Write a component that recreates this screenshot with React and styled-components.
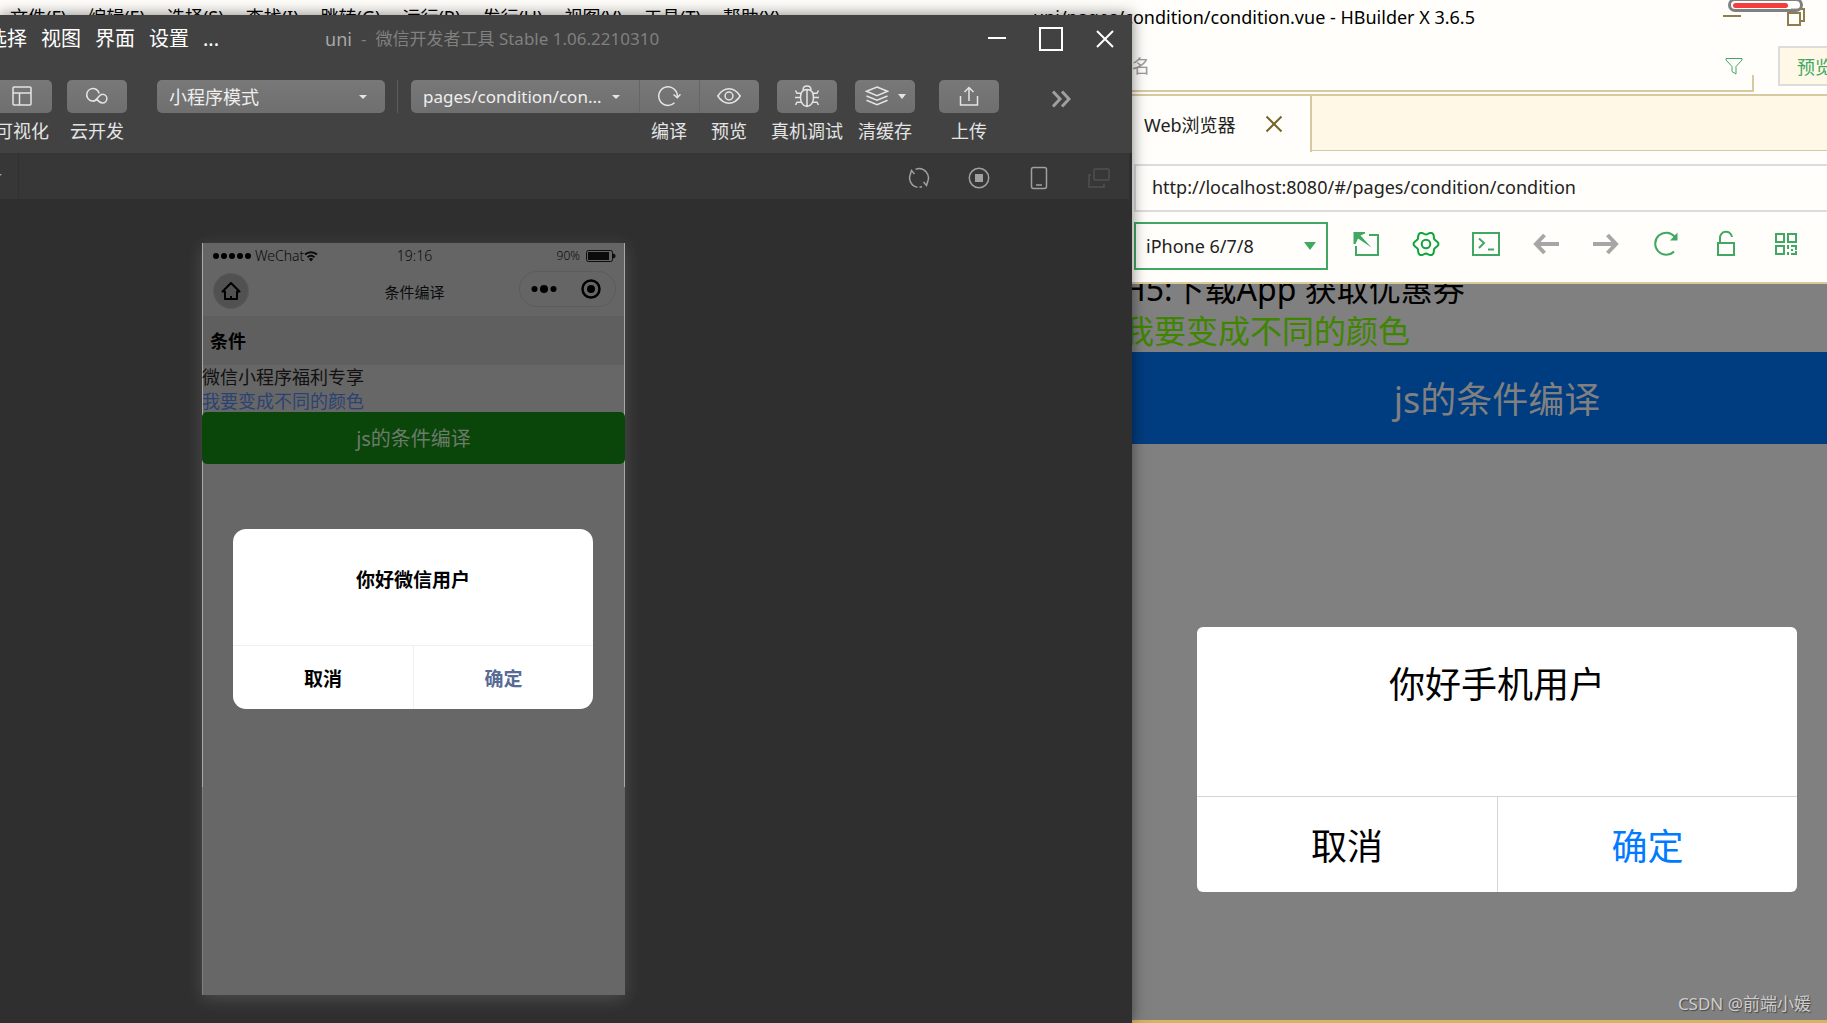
import React from "react";
import styled, { createGlobalStyle } from "styled-components";

const Global = createGlobalStyle`
  *, *::before, *::after { box-sizing: border-box; }
  html, body { margin: 0; height: 100%; overflow: hidden; }
  body, button, input, select {
    font-family: "Noto Sans", "Noto Sans CJK SC", sans-serif;
    font-size: 18px;
  }
  button, input, select {
    margin: 0; padding: 0; border: 0; border-radius: 0;
    background: none; color: inherit; appearance: none; outline: none;
  }
  h1, p { margin: 0; font-weight: 400; }
`;

const Desktop = styled.main`
  position: relative;
  height: 100vh;
  overflow: hidden;
  background: #fffefa;
`;

/* ---------- Icons ---------- */

const Svg = styled.svg`
  display: block;
  flex: none;
  width: ${(p) => p.$w || 24}px;
  height: ${(p) => p.$h || p.$w || 24}px;
  fill: none;
  stroke: currentColor;
  stroke-width: ${(p) => p.$s || 1.5};
`;

const Icon = ({ w, h, s, children }) => (
  <Svg $w={w} $h={h} $s={s} viewBox={`0 0 ${w || 24} ${h || w || 24}`} aria-hidden="true">
    {children}
  </Svg>
);

const LayoutIcon = () => (
  <Icon>
    <rect x="3" y="3" width="18" height="18" rx="1" />
    <path d="M3 9h18M9.5 9v12" />
  </Icon>
);
const CloudIcon = () => (
  <Icon>
    <path d="M12.200 15.500A6.300 6.300 0 1 1 14.200 9.500" />
    <path d="M8 17.200C12 17.200 13.500 10.200 17.500 10.200A4.400 4.400 0 0 1 17.500 19C14.800 19 13.300 17.200 11.800 15" />
  </Icon>
);
const CompileIcon = () => (
  <Icon>
    <path d="M17.500 18.800A9.300 9.300 0 1 1 20.300 13" />
    <path d="M16.500 10.500l3.800 3.300 3.200-3.500" />
  </Icon>
);
const EyeIcon = () => (
  <Icon>
    <path d="M.8 12C4 7 8 4.800 12 4.800S20 7 23.200 12C20 17 16 19.200 12 19.200S4 17 .8 12z" />
    <circle cx="12" cy="12" r="3.900" />
  </Icon>
);
const BugIcon = () => (
  <Icon w={26}>
    <path d="M13 6.500c4.500 0 6.500 3.500 6.500 8S17 23.500 13 23.500 6.500 19 6.500 14.500 8.500 6.500 13 6.500zM13 6.500v17" />
    <path d="M9 7C9 4.500 10.500 3 13 3s4 1.500 4 4M1 14.500h5.500M19.500 14.500H25M1.500 7.500l1.500 2.800h4.200M24.500 7.500L23 10.300h-4.200M1.500 22l1.500-2.800h4.200M24.500 22L23 19.200h-4.200" />
  </Icon>
);
const LayersIcon = () => (
  <Icon>
    <path d="M12 3l10.500 4.300L12 11.600 1.500 7.300zM1.500 12L12 16.300 22.500 12M1.500 16.300L12 20.600l10.500-4.300" />
  </Icon>
);
const UploadIcon = () => (
  <Icon>
    <path d="M3.500 12v9h17v-9M12 17V3.500M7.500 8L12 3.500 16.500 8" />
  </Icon>
);
const MoreIcon = () => (
  <Icon w={20} s={3}>
    <path d="M2 2.500L9 10l-7 7.500M11 2.500L18 10l-7 7.500" />
  </Icon>
);
const RestartIcon = () => (
  <Icon>
    <path d="M3.800 7.500A9.300 9.300 0 0 0 10.500 21.200M8.500 3.400A9.300 9.300 0 0 1 20.200 16.500M12.500 21.300l2.500-.5" />
    <path d="M3.200 8.500L4.500 4.500 7.500 8M20.800 15.500l-1.300 4-3-3.500" />
  </Icon>
);
const StopIcon = () => (
  <Icon>
    <circle cx="12" cy="12" r="9.700" />
    <rect x="8" y="8" width="8" height="8" fill="currentColor" stroke="none" />
  </Icon>
);
const DeviceIcon = () => (
  <Icon>
    <rect x="4.500" y="1.500" width="15" height="21" rx="2" />
    <path d="M9 19h6" />
  </Icon>
);
const WindowsIcon = () => (
  <Icon>
    <rect x="7" y="3" width="15" height="11" rx="1" />
    <path d="M4 9H2v12h15v-3" />
  </Icon>
);
const WifiIcon = () => (
  <Icon w={14} h={12} s={2}>
    <path d="M1 4.500a9 9 0 0 1 12 0M3.500 7.200a5.500 5.500 0 0 1 7 0" />
    <path d="M4.800 9L7 11.500 9.200 9a3.200 3.200 0 0 0-4.400 0z" fill="currentColor" stroke="none" />
  </Icon>
);
const HomeIcon = () => (
  <Icon w={20} s={2}>
    <path d="M1.500 10.500L10 2l8.500 8.500H16v7.500H4v-7.500z" strokeLinejoin="round" />
    <path d="M10 18v-3" />
  </Icon>
);
const BatteryIcon = () => (
  <Icon w={30} h={12} s={1}>
    <rect x=".5" y=".5" width="26" height="11" rx="2" />
    <rect x="2" y="2" width="21" height="8" fill="currentColor" stroke="none" />
    <path d="M27.500 4c2 0 2 4 0 4z" fill="currentColor" />
  </Icon>
);
const ExpandIcon = () => (
  <Icon w={28} s={2}>
    <path d="M17 5h9v20H4v-9" />
    <path d="M1.500 2H13v1.500L8.500 5.500 19.500 17.500 6 8.500 3.500 14h-2z" fill="currentColor" stroke="none" />
  </Icon>
);

/* Six-lobed outline: a circle whose radius swells once every 60 degrees. */
const gearPath = Array.from({ length: 72 }, (_, i) => {
  const a = (i * Math.PI) / 36;
  const r = 11 + 1.4 * Math.cos(6 * a);
  return `${i ? "L" : "M"}${(14 + r * Math.cos(a)).toFixed(1)} ${(14 + r * Math.sin(a)).toFixed(1)}`;
}).join("") + "z";

const GearIcon = () => (
  <Icon w={28} s={2}>
    <path d={gearPath} strokeLinejoin="round" />
    <circle cx="14" cy="14" r="4.300" />
  </Icon>
);
const TerminalIcon = () => (
  <Icon w={28} s={2}>
    <rect x="1" y="3" width="26" height="22" />
    <path d="M7 8.500l5 4.500-5 5M16 19.500h6" />
  </Icon>
);
const BackIcon = () => (
  <Icon w={28} s={4}>
    <path d="M27 14H4M12.500 5L4 14l8.500 9" />
  </Icon>
);
const ForwardIcon = () => (
  <Icon w={28} s={4}>
    <path d="M1 14h23M15.500 5l8.500 9-8.500 9" />
  </Icon>
);
const ReloadIcon = () => (
  <Icon w={28} s={2}>
    <path d="M22 21.500A11 11 0 1 1 22.500 6.500" />
    <path d="M25.500 2.500v8H18z" fill="currentColor" stroke="none" />
  </Icon>
);
const LockIcon = () => (
  <Icon w={28} s={2}>
    <rect x="6" y="13" width="16" height="12" />
    <path d="M8 13V8.500a6 6 0 0 1 12-1.500" />
  </Icon>
);
const QrIcon = () => (
  <Icon w={28} s={2}>
    <path d="M4 4h8v8H4zM16 4h8v8h-8zM4 16h8v8H4zM16 15v4M19 16h5v4M16 22v3M19 24h5v-3M19 20h2" />
  </Icon>
);
const FilterIcon = () => (
  <Icon w={18} s={1}>
    <path d="M1 1.500h16v1.500L11 9.500V17l-4-2.500v-5L1 3z" />
  </Icon>
);
const Caret = ({ w = 10, h = 5 }) => (
  <Icon w={w} h={h}>
    <path d={`M0 0h${w}L${w / 2} ${h}z`} fill="currentColor" stroke="none" />
  </Icon>
);

/* ---------- HBuilder window ---------- */

const Editor = styled.section`
  height: 100%;
  display: flex;
  flex-direction: column;
  color: #000;
  border-bottom: 3px solid #d4b363;
`;

const EditorHeader = styled.header`
  flex: none;
  height: 34px;
  display: flex;
  align-items: center;
  padding: 0 22px 0 10px;
`;

const EditorMenu = styled.nav`
  display: flex;
  gap: 22px;
  button { white-space: nowrap; line-height: 24px; }
`;

const EditorTitle = styled.h1`
  margin-left: auto;
  margin-right: 248px;
  font-size: 18px;
  line-height: 24px;
  white-space: nowrap;
`;

const EditorControls = styled.div`
  display: flex;
  gap: 46px;
  color: #8e7d4d;
`;

const SearchRow = styled.div`
  flex: none;
  height: 60px;
  display: flex;
  justify-content: flex-end;
  align-items: flex-start;
  overflow: hidden;
`;

const SearchField = styled.label`
  display: flex;
  align-items: center;
  width: 686px;
  height: 58px;
  padding: 8px 9px 0 28px;
  color: #40a862;
  border-bottom: 2px solid #d8c9a0;
  border-right: 2px solid;
  border-image: linear-gradient(to top, #d8c9a0 16px, transparent 16px) 2;
  input {
    flex: 1;
    min-width: 0;
    color: #333;
    &::placeholder { color: #999; opacity: 1; }
  }
`;

const PreviewButton = styled.button`
  flex: none;
  width: 74px;
  height: 40px;
  margin: 12px -25px 0 24px;
  border: 2px solid #dcdcdc;
  background: #fff8e7;
  color: #40a862;
`;

const Dock = styled.div`
  flex: 1;
  min-height: 0;
  width: 705px;
  margin-left: auto;
  display: flex;
  flex-direction: column;
  overflow: hidden;
  border-top: 2px solid #d8c9a0;
`;

const TabBar = styled.div`
  flex: none;
  display: flex;
  height: 56px;
`;

const Tab = styled.div`
  display: flex;
  align-items: center;
  gap: 29px;
  width: 190px;
  padding-left: 22px;
  color: #222;
  border-right: 2px solid #d8c9a0;
  button { color: #77632b; }
`;

const TabFill = styled.div`
  flex: 1;
  height: 55px;
  background: #fff8e7;
  border-bottom: 1px solid #d8c9a0;
`;

const AddressInput = styled.input`
  flex: none;
  height: 48px;
  margin: 12px -4px 0 12px;
  padding: 0 16px 2px;
  font-size: 18px;
  color: #222;
  border: 2px solid #dcdcdc;
`;

const BrowserTools = styled.div`
  flex: none;
  display: flex;
  align-items: center;
  gap: 32px;
  height: 72px;
  padding: 0 27px 2px 12px;
  border-bottom: 2px solid #d8c9a0;
  color: #40a862;
  > button { padding-bottom: 4px; }
`;

const SelectBox = styled.span`
  display: grid;
  align-items: center;
  flex: none;
  width: ${(p) => p.$w}px;
  height: ${(p) => p.$h}px;
  > * { grid-area: 1 / 1; }
  > select { width: 100%; height: 100%; }
  > svg { justify-self: end; margin-right: ${(p) => p.$arrow}px; pointer-events: none; }
`;

const DeviceSelect = styled(SelectBox)`
  margin: 0 -8px 0 0;
  border: 2px solid #40a862;
  select { padding-left: 10px; font-size: 18px; color: #222; }
`;

const PlainButton = styled.button`
  flex: none;
  display: grid;
  place-items: center;
  color: ${(p) => p.$color || "inherit"};
`;

const H5Viewport = styled.div`
  flex: 1;
  min-height: 0;
  overflow: hidden;
  background: #808080;
`;

const H5Page = styled.div`
  position: relative;
  width: 750px;
  margin-top: -16px;
  font-size: 32px;
  line-height: 42px;
`;

const Line = styled.p`
  color: ${(p) => p.$color};
  white-space: nowrap;
`;

const PageButton = styled.button`
  display: block;
  width: 100%;
  height: ${(p) => p.$h}px;
  padding-bottom: 2px;
  font-size: ${(p) => p.$size}px;
  color: ${(p) => p.$color};
  background: ${(p) => p.$bg};
  border-radius: ${(p) => p.$radius || 0}px;
`;

/* ---------- Modal, shared by both previews ---------- */

const ModalBox = styled.div`
  position: absolute;
  top: ${(p) => p.$top}px;
  left: ${(p) => p.$left}px;
  width: ${(p) => p.$w}px;
  overflow: hidden;
  border-radius: ${(p) => p.$radius}px;
  background: #fff;
  color: #000;
  text-align: center;
  font-size: ${(p) => p.$size}px;
  font-weight: ${(p) => p.$weight};
`;

const ModalTitle = styled.div`
  height: ${(p) => p.$h}px;
  padding-top: ${(p) => p.$pad}px;
  line-height: 40px;
`;

const ModalActions = styled.div`
  display: grid;
  grid-template-columns: 1fr 1fr;
  height: ${(p) => p.$h}px;
  border-top: 1px solid ${(p) => p.$line};
  button { font-size: inherit; font-weight: inherit; }
  button + button {
    color: ${(p) => p.$accent};
    border-left: 1px solid ${(p) => p.$line};
  }
`;

/* ---------- WeChat developer tools window ---------- */

const DevTools = styled.section`
  position: absolute;
  inset: 15px 695px 0 0;
  display: flex;
  flex-direction: column;
  background: #2f2f2f;
  box-shadow: 0 0 14px rgba(0, 0, 0, 0.5);
`;

const DevTitleBar = styled.header`
  flex: none;
  display: flex;
  align-items: center;
  height: 47px;
  padding: 0 18px 0 0;
  background: #424242;
  color: #808080;
`;

const DevMenu = styled.nav`
  display: flex;
  gap: 14px;
  margin: 0 106px 0 -13px;
  button { font-size: 20px; color: #fff; white-space: nowrap; line-height: 28px; }
`;

const DevTitle = styled.h1`
  display: flex;
  gap: 9px;
  font-size: 17px;
  line-height: 24px;
  white-space: nowrap;
  b { font-weight: 400; font-size: 18px; color: #a8a8a8; }
`;

const DevControls = styled.div`
  display: flex;
  gap: 33px;
  margin-left: auto;
  color: #fff;
`;

const ToolBar = styled.div`
  flex: none;
  display: flex;
  align-items: flex-start;
  height: 91px;
  padding: 18px 61px 0 0;
  background: #424242;
  color: #e4e4e4;
`;

const ToolGroup = styled.div`
  display: flex;
  gap: ${(p) => p.$gap || 0}px;
  margin-left: ${(p) => p.$ml || 0}px;
`;

const chip = `
  background: linear-gradient(#787878, #6f6f6f);
  border-radius: 5px;
`;

const ToolButton = styled.button`
  display: flex;
  flex-direction: column;
  align-items: center;
  gap: 6px;
  width: 60px;
  line-height: 24px;
  white-space: nowrap;
`;

const Chip = styled.span`
  display: flex;
  align-items: center;
  justify-content: center;
  gap: 9px;
  width: 60px;
  height: 33px;
  padding-bottom: 1px;
  ${chip}
  ${(p) => p.$joined && "box-shadow: inset 1px 0 #666;"}
  ${(p) => p.$joined === "mid" && "border-radius: 0;"}
  ${(p) => p.$joined === "end" && "border-radius: 0 5px 5px 0;"}
`;

const ToolSelect = styled(SelectBox)`
  ${chip}
  ${(p) => p.$joined && "border-radius: 5px 0 0 5px;"}
  select { padding-left: 12px; font-size: ${(p) => p.$size}px; color: #eee; }
`;

const Divider = styled.span`
  width: 1px;
  height: ${(p) => p.$h}px;
  margin: 0 13px 0 12px;
  background: #5c5c5c;
`;

const MoreButton = styled(PlainButton)`
  height: 38px;
  margin-left: auto;
  color: #a0a0a0;
`;

const SubBar = styled.div`
  flex: none;
  display: flex;
  align-items: center;
  gap: 36px;
  height: 46px;
  padding: 0 18px 0 0;
  border-right: 3px solid #2f2f2f;
  background: #373737;
  color: #a0a0a0;
  > button { padding-top: 4px; }
`;

const SubBarStart = styled.div`
  display: flex;
  align-items: center;
  width: 19px;
  height: 100%;
  margin: 0 auto 0 0;
  border-right: 1px solid #303030;
  svg { margin-left: -6px; }
`;

const Stage = styled.div`
  flex: 1;
  min-height: 0;
  padding: 44px 0 0 202px;
`;

const Phone = styled.div`
  position: relative;
  width: 423px;
  background: #676767;
  color: #0b0b0b;
  box-shadow: 0 4px 16px rgba(255, 255, 255, 0.15);
`;

const Screen = styled.div`
  height: 544px;
  box-shadow: inset 1px 0 #a9a9a9, inset -1px 0 #a9a9a9;
`;

const ScreenRest = styled.div`
  height: 208px;
  border-left: 1px solid #808080;
`;

const ThreeCols = styled.div`
  display: grid;
  grid-template-columns: 1fr auto 1fr;
  align-items: center;
  height: ${(p) => p.$h}px;
  margin: 0 1px;
  padding: 0 8px ${(p) => p.$pb || 0}px 10px;
  background: #656565;
  font-size: ${(p) => p.$size}px;
  > :last-child { justify-self: end; }
`;

const StatusPart = styled.span`
  display: flex;
  align-items: center;
  gap: ${(p) => p.$gap || 0}px;
  font-size: ${(p) => p.$size || 14}px;
  font-weight: 300;
`;

const Dots = styled.span`
  display: flex;
  gap: 2px;
  margin-right: 4px;
  i { width: 6px; height: 6px; border-radius: 3px; background: #000; }
`;

const HomeButton = styled.button`
  display: grid;
  place-items: center;
  width: 36px;
  height: 36px;
  border: 1px solid #5a5a5a;
  border-radius: 18px;
  background: #515151;
  color: #000;
`;

const Capsule = styled.span`
  display: grid;
  grid-template-columns: 1fr 1fr;
  width: 97px;
  height: 36px;
  margin-bottom: 4px;
  border: 1px solid #5c5c5c;
  border-radius: 18px;
  color: #000;
`;

const SectionTitle = styled.div`
  height: 49px;
  margin: 0 1px;
  padding: 0 7px;
  line-height: 50px;
  font-weight: 700;
  background: #5f5f5f;
  color: #000;
`;

const PhoneText = styled.div`
  line-height: 24px;
  height: 47px;
`;

/* ---------- Desktop overlays ---------- */

const Recorder = styled.div`
  position: absolute;
  top: -2px;
  right: 24px;
  width: 75px;
  height: 14px;
  padding: 2px 12px 3px 2px;
  border: 3px solid #808080;
  border-radius: 7px;
  background: rgba(255, 255, 255, 0.6);
  &::before {
    content: "";
    display: block;
    height: 5px;
    border-radius: 3px;
    background: #f73c3c;
  }
`;

const Watermark = styled.div`
  position: absolute;
  right: 16px;
  bottom: 7px;
  font-size: 17px;
  line-height: 24px;
  color: #cdcdcd;
  text-shadow: 1px 1px 1px #444;
`;

const editorMenu = ["文件(F)", "编辑(E)", "选择(S)", "查找(I)", "跳转(G)", "运行(R)", "发行(U)", "视图(V)", "工具(T)", "帮助(Y)"];

const browserTools = [
  ["弹出", ExpandIcon],
  ["设置", GearIcon, "#0fa53c"],
  ["控制台", TerminalIcon],
  ["后退", BackIcon, "#a6a6a6"],
  ["前进", ForwardIcon, "#a6a6a6"],
  ["刷新", ReloadIcon],
  ["锁定", LockIcon],
  ["二维码", QrIcon],
];

const simulatorTools = [
  ["重启", RestartIcon],
  ["停止", StopIcon],
  ["设备", DeviceIcon],
  ["分离窗口", WindowsIcon, "#505050"],
];

const Tool = ({ label, icon: I, joined, caret }) => (
  <ToolButton type="button">
    <Chip $joined={joined}>
      <I />
      {caret && <Caret w={8} />}
    </Chip>
    {label}
  </ToolButton>
);

function HBuilder() {
  return (
    <Editor>
      <EditorHeader>
        <EditorMenu>
          {editorMenu.map((m) => <button type="button" key={m}>{m}</button>)}
        </EditorMenu>
        <EditorTitle>uni/pages/condition/condition.vue - HBuilder X 3.6.5</EditorTitle>
        <EditorControls>
          <PlainButton type="button" aria-label="最小化">
            <Icon w={18} s={2}><path d="M0 8h18" /></Icon>
          </PlainButton>
          <PlainButton type="button" aria-label="还原">
            <Icon w={18} s={2}><path d="M1 5h12v12H1zM5 5V1h12v12h-4" /></Icon>
          </PlainButton>
        </EditorControls>
      </EditorHeader>
      <SearchRow>
        <SearchField>
          <input type="text" placeholder="文件名" aria-label="文件名" />
          <FilterIcon />
        </SearchField>
        <PreviewButton type="button">预览</PreviewButton>
      </SearchRow>
      <Dock>
        <TabBar>
          <Tab>
            Web浏览器
            <PlainButton type="button" aria-label="关闭">
              <Icon w={18} s={2}><path d="M1.500 1.500l15 15M16.500 1.500l-15 15" /></Icon>
            </PlainButton>
          </Tab>
          <TabFill />
        </TabBar>
        <AddressInput type="text" aria-label="地址" defaultValue="http://localhost:8080/#/pages/condition/condition" />
        <BrowserTools>
          <DeviceSelect $w={194} $h={48} $arrow={10}>
            <select aria-label="设备"><option>iPhone 6/7/8</option></select>
            <Caret w={12} h={8} />
          </DeviceSelect>
          {browserTools.map(([name, I, color]) => (
            <PlainButton type="button" key={name} aria-label={name} $color={color}><I /></PlainButton>
          ))}
        </BrowserTools>
        <H5Viewport>
          <H5Page>
            <Line $color="#000">H5:下载App 获取优惠券</Line>
            <Line $color="#3f8500">我要变成不同的颜色</Line>
            <PageButton type="button" $h={92} $size={36} $color="#808080" $bg="#003d80">js的条件编译</PageButton>
            <ModalBox $top={359} $left={75} $w={600} $radius={6} $size={36} $weight={400}>
              <ModalTitle $h={169} $pad={38}>你好手机用户</ModalTitle>
              <ModalActions $h={96} $line="#d5d5d6" $accent="#007aff">
                <button type="button">取消</button>
                <button type="button">确定</button>
              </ModalActions>
            </ModalBox>
          </H5Page>
        </H5Viewport>
      </Dock>
    </Editor>
  );
}

function WeChatDevTools() {
  return (
    <DevTools>
      <DevTitleBar>
        <DevMenu>
          {["选择", "视图", "界面", "设置", "..."].map((m) => <button type="button" key={m}>{m}</button>)}
        </DevMenu>
        <DevTitle><b>uni</b><span>-</span><span>微信开发者工具 Stable 1.06.2210310</span></DevTitle>
        <DevControls>
          <PlainButton type="button" aria-label="最小化">
            <Icon w={18} s={2}><path d="M0 8h18" /></Icon>
          </PlainButton>
          <PlainButton type="button" aria-label="最大化">
            <Icon w={24} s={2}><rect x="1" y="1" width="22" height="22" /></Icon>
          </PlainButton>
          <PlainButton type="button" aria-label="关闭">
            <Icon w={18} s={2}><path d="M1 1l16 16M17 1L1 17" /></Icon>
          </PlainButton>
        </DevControls>
      </DevTitleBar>
      <ToolBar>
        <ToolGroup $gap={15} $ml={-8}>
          <Tool label="可视化" icon={LayoutIcon} />
          <Tool label="云开发" icon={CloudIcon} />
        </ToolGroup>
        <ToolGroup $ml={30}>
          <ToolSelect $w={228} $h={33} $arrow={18} $size={18}>
            <select aria-label="模式"><option>小程序模式</option></select>
            <Caret w={8} h={4} />
          </ToolSelect>
          <Divider $h={33} />
          <ToolSelect $w={228} $h={33} $arrow={19} $size={17} $joined>
            <select aria-label="编译模式"><option>pages/condition/con...</option></select>
            <Caret w={8} h={4} />
          </ToolSelect>
          <Tool label="编译" icon={CompileIcon} joined="mid" />
          <Tool label="预览" icon={EyeIcon} joined="end" />
        </ToolGroup>
        <ToolGroup $gap={18} $ml={18}>
          <Tool label="真机调试" icon={BugIcon} />
          <Tool label="清缓存" icon={LayersIcon} caret />
        </ToolGroup>
        <ToolGroup $ml={24}>
          <Tool label="上传" icon={UploadIcon} />
        </ToolGroup>
        <MoreButton type="button" aria-label="更多"><MoreIcon /></MoreButton>
      </ToolBar>
      <SubBar>
        <SubBarStart><Caret w={8} h={4} /></SubBarStart>
        {simulatorTools.map(([name, I, color]) => (
          <PlainButton type="button" key={name} aria-label={name} $color={color}><I /></PlainButton>
        ))}
      </SubBar>
      <Stage>
        <Phone>
          <Screen>
            <ThreeCols $h={26} $size={14} $pb={1}>
              <StatusPart>
                <Dots><i /><i /><i /><i /><i /></Dots>
                WeChat
                <WifiIcon />
              </StatusPart>
              <StatusPart>19:16</StatusPart>
              <StatusPart $gap={6} $size={12}>90%<BatteryIcon /></StatusPart>
            </ThreeCols>
            <ThreeCols $h={47} $size={15} $pb={3}>
              <HomeButton type="button" aria-label="首页"><HomeIcon /></HomeButton>
              <span>条件编译</span>
              <Capsule>
                <PlainButton type="button" aria-label="菜单">
                  <Icon w={26} h={10}>
                    <g fill="currentColor" stroke="none">
                      <circle cx="3.500" cy="5" r="3" />
                      <circle cx="13" cy="5" r="4" />
                      <circle cx="22.500" cy="5" r="3" />
                    </g>
                  </Icon>
                </PlainButton>
                <PlainButton type="button" aria-label="关闭小程序">
                  <Icon w={20} s={2.500}>
                    <circle cx="10" cy="10" r="8.500" />
                    <circle cx="10" cy="10" r="4" fill="currentColor" stroke="none" />
                  </Icon>
                </PlainButton>
              </Capsule>
            </ThreeCols>
            <SectionTitle>条件</SectionTitle>
            <PhoneText>
              <Line $color="#111">微信小程序福利专享</Line>
              <Line $color="#2a4373">我要变成不同的颜色</Line>
            </PhoneText>
            <PageButton type="button" $h={52} $size={20} $color="#6c7a6c" $bg="#0a460a" $radius={5}>js的条件编译</PageButton>
          </Screen>
          <ScreenRest />
          <ModalBox $top={286} $left={31} $w={360} $radius={13} $size={19} $weight={700}>
            <ModalTitle $h={116} $pad={31}>你好微信用户</ModalTitle>
            <ModalActions $h={64} $line="#f0f0f0" $accent="#576b95">
              <button type="button">取消</button>
              <button type="button">确定</button>
            </ModalActions>
          </ModalBox>
        </Phone>
      </Stage>
    </DevTools>
  );
}

export default function App() {
  return (
    <Desktop>
      <Global />
      <HBuilder />
      <WeChatDevTools />
      <Recorder />
      <Watermark>CSDN @前端小媛</Watermark>
    </Desktop>
  );
}
